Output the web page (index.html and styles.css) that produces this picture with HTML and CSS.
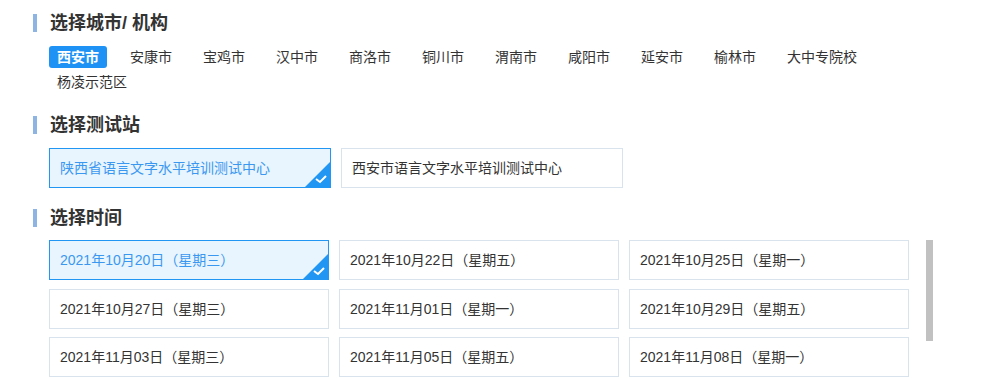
FILE: index.html
```html
<!DOCTYPE html>
<html lang="zh-CN">
<head>
    <meta charset="UTF-8">
    <meta name="viewport" content="width=device-width, initial-scale=1.0">
    <title>选择考点</title>
    <link rel="stylesheet" href="styles.css">
</head>
<body>
    <div class="page">

        <section class="block">
            <h2 class="block-title">选择城市/ 机构</h2>
            <ul class="city-list">
                <li class="city active">西安市</li>
                <li class="city">安康市</li>
                <li class="city">宝鸡市</li>
                <li class="city">汉中市</li>
                <li class="city">商洛市</li>
                <li class="city">铜川市</li>
                <li class="city">渭南市</li>
                <li class="city">咸阳市</li>
                <li class="city">延安市</li>
                <li class="city">榆林市</li>
                <li class="city">大中专院校</li>
                <li class="city">杨凌示范区</li>
            </ul>
        </section>

        <section class="block">
            <h2 class="block-title">选择测试站</h2>
            <div class="station-list">
                <div class="option station active">
                    陕西省语言文字水平培训测试中心
                    <svg class="corner" viewBox="0 0 25 25"><path d="M25 0V25H0Z" fill="#2196f3"/><path d="M11 17l4 3 6-6" stroke="#fff" stroke-width="2" fill="none"/></svg>
                </div>
                <div class="option station">西安市语言文字水平培训测试中心</div>
            </div>
        </section>

        <section class="block">
            <h2 class="block-title">选择时间</h2>
            <div class="time-scroll">
                <div class="time-grid">
                    <div class="option active">
                        2021年10月20日（星期三）
                        <svg class="corner" viewBox="0 0 25 25"><path d="M25 0V25H0Z" fill="#2196f3"/><path d="M11 17l4 3 6-6" stroke="#fff" stroke-width="2" fill="none"/></svg>
                    </div>
                    <div class="option">2021年10月22日（星期五）</div>
                    <div class="option">2021年10月25日（星期一）</div>
                    <div class="option">2021年10月27日（星期三）</div>
                    <div class="option">2021年11月01日（星期一）</div>
                    <div class="option">2021年10月29日（星期五）</div>
                    <div class="option">2021年11月03日（星期三）</div>
                    <div class="option">2021年11月05日（星期五）</div>
                    <div class="option">2021年11月08日（星期一）</div>
                </div>
                <div class="scroll-thumb"></div>
            </div>
        </section>

    </div>
</body>
</html>
```

FILE: styles.css
```css
body {
    margin: 0;
    font-family: "Liberation Sans", "Noto Sans CJK SC", sans-serif;
    color: #333;
    background-color: #fff;
    overflow: hidden;
}

.page {
    padding: 14px 0 0 33px;
}

.block + .block {
    margin-top: 21px;
}

.block-title {
    display: flex;
    align-items: center;
    margin: 0 0 14px;
    font-size: 18px;
    line-height: 18px;
    font-weight: bold;
    color: #333;
}

.block-title::before {
    content: "";
    width: 4px;
    height: 18px;
    margin-right: 13px;
    background-color: #8db4e2;
}

/* cities */
.city-list {
    display: flex;
    flex-wrap: wrap;
    row-gap: 3px;
    width: 880px;
    margin: 0 0 0 16px;
    padding: 0 0 2px;
    list-style: none;
}

.city {
    padding: 0 8px;
    margin-right: 15px;
    font-size: 14px;
    line-height: 22px;
    border-radius: 3px;
    cursor: pointer;
}

.city.active {
    background-color: #1f93f5;
    color: #fff;
    font-weight: bold;
}

/* station + time boxes */
.option {
    position: relative;
    box-sizing: border-box;
    height: 40px;
    padding: 0 10px;
    border: 1px solid #d9e3ee;
    font-size: 14px;
    line-height: 38px;
    white-space: nowrap;
    cursor: pointer;
}

.option.active {
    border-color: #2196f3;
    background-color: #e8f4fe;
    color: #3a98f0;
}

.corner {
    position: absolute;
    right: 0;
    bottom: 0;
    width: 25px;
    height: 25px;
}

.station-list {
    display: flex;
    gap: 10px;
    margin-left: 16px;
}

.station {
    width: 282px;
}

.time-scroll {
    position: relative;
    width: 884px;
    margin: -1px 0 0 16px;
}

.time-grid {
    display: grid;
    grid-template-columns: repeat(3, 280px);
    column-gap: 10px;
    row-gap: 8.5px;
}

.scroll-thumb {
    position: absolute;
    top: 0;
    right: 0;
    width: 7px;
    height: 101px;
    background-color: #c1c1c1;
}
```
